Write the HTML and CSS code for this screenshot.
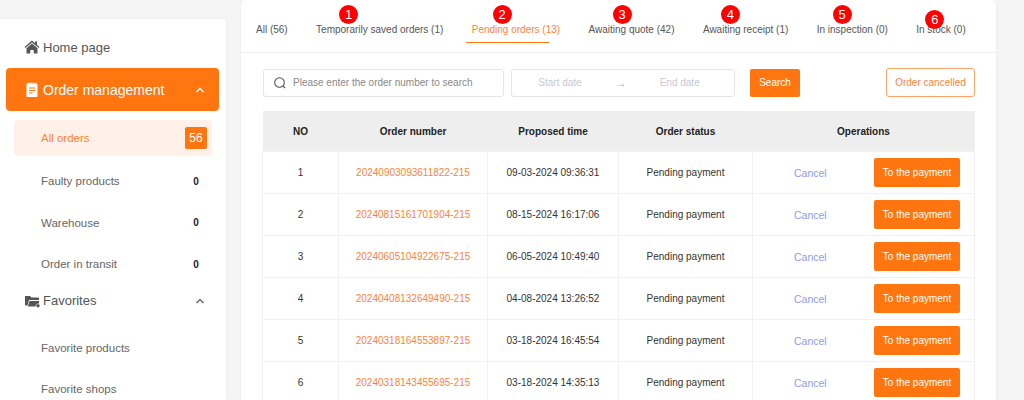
FILE: index.html
```html
<!DOCTYPE html>
<html lang="en">
<head>
  <meta charset="UTF-8">
  <title>Order management</title>
  <link rel="stylesheet" href="styles.css">
</head>
<body>
  <div class="page">
    <aside class="sidebar">
      <a class="nav-top">
        <svg class="nav-icon" viewBox="0 0 16 16"><path fill="#555" d="M8 1.6 .6 8l.8 1L8 3.4 14.6 9l.8-1-2.4-2.1V2.4h-2v1.8z"/><path fill="#555" d="M8 4.6 2.5 9.2V14.5h3.8v-3.6h3.4v3.600h3.800V9.2z"/></svg>
        Home page
      </a>
      <a class="nav-main">
        <svg class="nav-icon" viewBox="0 0 16 16"><path fill="#fff" fill-rule="evenodd" d="M3.5 1.5h.9V.6h1v.9h1.100V.6h1v.9h1.100V.6h1v.9h1.100V.6h1v.9h.8c.6 0 1 .4 1 1v11.600c0 .6-.4 1-1 1h-9c-.6 0-1-.4-1-1V2.5c0-.6.4-1 1-1zM5 5.5v1.100h6V5.500zM5 8v1.100h6V8zm0 2.500v1.100h3.500v-1.100z"/></svg>
        <span class="nav-label">Order management</span>
        <svg class="chev" viewBox="0 0 10 6"><path fill="none" stroke="#fff" stroke-width="1.5" d="M1.5 5 5 1.5 8.5 5"/></svg>
      </a>
      <ul class="sub-list">
        <li class="sub-item active">All orders <span class="count-box">56</span></li>
        <li class="sub-item faulty">Faulty products <span class="count">0</span></li>
        <li class="sub-item">Warehouse <span class="count">0</span></li>
        <li class="sub-item">Order in transit <span class="count">0</span></li>
      </ul>
      <a class="nav-top fav">
        <svg class="nav-icon" viewBox="0 0 16 16"><path fill="#555" d="M1 3h5l1.500 1.500H14c.5 0 1 .4 1 1V7H5L3.500 12.500H1z"/><path fill="#555" d="M5.500 8H15v2.500a3 3 0 0 0-3.500 3H3.800z"/><circle cx="14" cy="12.8" r="1.7" fill="#555"/></svg>
        <span class="nav-label">Favorites</span>
        <svg class="chev" viewBox="0 0 10 6"><path fill="none" stroke="#555" stroke-width="1.2" d="M1.5 5 5 1.5 8.5 5"/></svg>
      </a>
      <ul class="sub-list fav-list">
        <li class="sub-item">Favorite products</li>
        <li class="sub-item">Favorite shops</li>
      </ul>
    </aside>

    <main class="content">
      <div class="tabs">
        <div class="tab">All (56)</div>
        <div class="tab">Temporarily saved orders (1)<span class="mark m1">1</span></div>
        <div class="tab active">Pending orders (13)<span class="mark m2">2</span></div>
        <div class="tab">Awaiting quote (42)<span class="mark m3">3</span></div>
        <div class="tab">Awaiting receipt (1)<span class="mark m4">4</span></div>
        <div class="tab">In inspection (0)<span class="mark m5">5</span></div>
        <div class="tab">In stock (0)<span class="mark m6">6</span></div>
      </div>

      <div class="filters">
        <div class="search-box">
          <svg class="search-icon" viewBox="0 0 14 14"><circle cx="6.5" cy="6.5" r="4.8" fill="none" stroke="#555" stroke-width="1.1"/><path stroke="#555" stroke-width="1.1" d="m10 10 2.200 2.200"/></svg>
          Please enter the order number to search
        </div>
        <div class="date-box">
          <span>Start date</span>
          <span class="arrow">&#8594;</span>
          <span>End date</span>
        </div>
        <button class="btn search-btn">Search</button>
        <button class="cancelled-btn">Order cancelled</button>
      </div>

      <table class="orders">
        <colgroup>
          <col class="c-no"><col class="c-num"><col class="c-time"><col class="c-status"><col>
        </colgroup>
        <thead>
          <tr><th>NO</th><th>Order number</th><th>Proposed time</th><th>Order status</th><th>Operations</th></tr>
        </thead>
        <tbody>
          <tr><td>1</td><td class="num">20240903093611822-215</td><td>09-03-2024 09:36:31</td><td>Pending payment</td><td><div class="ops"><span class="cancel">Cancel</span><button class="btn pay-btn">To the payment</button></div></td></tr>
          <tr><td>2</td><td class="num">20240815161701904-215</td><td>08-15-2024 16:17:06</td><td>Pending payment</td><td><div class="ops"><span class="cancel">Cancel</span><button class="btn pay-btn">To the payment</button></div></td></tr>
          <tr><td>3</td><td class="num">20240605104922675-215</td><td>06-05-2024 10:49:40</td><td>Pending payment</td><td><div class="ops"><span class="cancel">Cancel</span><button class="btn pay-btn">To the payment</button></div></td></tr>
          <tr><td>4</td><td class="num">20240408132649490-215</td><td>04-08-2024 13:26:52</td><td>Pending payment</td><td><div class="ops"><span class="cancel">Cancel</span><button class="btn pay-btn">To the payment</button></div></td></tr>
          <tr><td>5</td><td class="num">20240318164553897-215</td><td>03-18-2024 16:45:54</td><td>Pending payment</td><td><div class="ops"><span class="cancel">Cancel</span><button class="btn pay-btn">To the payment</button></div></td></tr>
          <tr><td>6</td><td class="num">20240318143455695-215</td><td>03-18-2024 14:35:13</td><td>Pending payment</td><td><div class="ops"><span class="cancel">Cancel</span><button class="btn pay-btn">To the payment</button></div></td></tr>
        </tbody>
      </table>
    </main>
  </div>
</body>
</html>
```

FILE: styles.css
```css
html, body {
  margin: 0;
  height: 400px;
  overflow: hidden;
  background-color: #f5f5f5;
}
body {
  font-family: "Liberation Sans", Arial, sans-serif;
  font-size: 10px;
  color: #333;
}
.page {
  display: flex;
  align-items: flex-start;
  gap: 15px;
  height: 400px;
}

/* Sidebar */
.sidebar {
  width: 226px;
  height: 381px;
  margin-top: 19px;
  padding: 7px 7px 0 6px;
  box-sizing: border-box;
  background-color: #fff;
  border-radius: 0 4px 0 0;
  box-shadow: 0 0 2px rgba(0, 0, 0, 0.08);
  overflow: hidden;
}
.nav-top {
  display: flex;
  align-items: center;
  height: 42px;
  padding: 0 14px 0 18px;
  font-size: 13px;
  color: #555;
}
.nav-icon {
  width: 16px;
  height: 16px;
  margin-right: 3px;
  flex: none;
}
.nav-main {
  display: flex;
  align-items: center;
  height: 43px;
  padding: 0 14px 0 18px;
  background-color: #ff750f;
  border-radius: 4px;
  font-size: 14px;
  color: #fff;
}
.nav-label {
  flex: 1;
}
.chev {
  width: 10px;
  height: 6px;
}
.sub-list {
  list-style: none;
  margin: 9px 0 0;
  padding: 0 7px 0 8px;
}
.sub-item {
  display: flex;
  align-items: center;
  justify-content: space-between;
  height: 36px;
  padding: 0 5px 0 27px;
  margin-bottom: 5.5px;
  font-size: 11.5px;
  color: #666;
}
.sub-item.active {
  background-color: #fff1e8;
  border-radius: 4px;
  color: #ff8238;
}
.sub-item.faulty {
  margin-top: 7px;
}
.count-box {
  width: 22px;
  height: 22px;
  line-height: 22px;
  text-align: center;
  font-size: 12px;
  background-color: #ff750f;
  border-radius: 2px;
  color: #fff;
}
.count {
  width: 22px;
  text-align: center;
  font-size: 10px;
  font-weight: bold;
  color: #222;
}
.fav {
  height: 38px;
  margin-top: -6px;
}
.fav-list {
  margin-top: 10px;
}
.fav-list .sub-item {
  margin-bottom: 5px;
}

/* Main panel */
.content {
  position: relative;
  width: 755px;
  height: 400px;
  background-color: #fff;
  border-radius: 4px 4px 0 0;
  box-shadow: 0 0 2px rgba(0, 0, 0, 0.1);
  overflow: hidden;
}
.tabs {
  display: flex;
  gap: 28.4px;
  height: 53px;
  padding: 23px 0 0 15px;
  box-sizing: border-box;
  border-bottom: 1px solid #eee;
  line-height: 14px;
  color: #555;
}
.tab {
  position: relative;
  white-space: nowrap;
}
.tab.active {
  color: #ff8238;
}
.tab.active::after {
  content: "";
  position: absolute;
  left: -6px;
  top: 19px;
  width: 83px;
  height: 1px;
  background-color: #ff750f;
}

/* Numbered callouts drawn over the tabs */
.mark {
  position: absolute;
  width: 19px;
  height: 19px;
  line-height: 19px;
  border-radius: 50%;
  background-color: #f00;
  color: #fff;
  font-size: 13px;
  text-align: center;
}
.m1 { left: 23px; top: -18px; }
.m2 { left: 21px; top: -18px; }
.m3 { left: 24px; top: -18px; }
.m4 { left: 18px; top: -18px; }
.m5 { left: 16px; top: -18px; }
.m6 { left: 9px; top: -13px; }

.filters {
  display: flex;
  align-items: center;
  height: 29px;
  margin: 15px 21px 0 22px;
}
.search-box {
  display: flex;
  align-items: center;
  width: 241px;
  height: 28px;
  padding-left: 9px;
  box-sizing: border-box;
  border: 1px solid #e3e6ec;
  border-radius: 3px;
  color: #888;
}
.search-icon {
  width: 14px;
  height: 14px;
  margin-right: 6px;
}
.date-box {
  display: flex;
  align-items: center;
  justify-content: center;
  gap: 33px;
  width: 224px;
  height: 28px;
  margin-left: 7px;
  padding-right: 8px;
  box-sizing: border-box;
  border: 1px solid #e3e6ec;
  border-radius: 3px;
  color: #c5c9d0;
}
.arrow {
  font-size: 12px;
  color: #b5b9c0;
}
.btn {
  border: none;
  border-radius: 2px;
  background-color: #ff750f;
  color: #fff;
  font-family: inherit;
  font-size: 10px;
  padding: 0;
}
.search-btn {
  width: 50px;
  height: 28px;
  margin-left: 15px;
}
.cancelled-btn {
  width: 89px;
  height: 29px;
  margin-left: auto;
  padding: 0;
  background-color: #fff;
  border: 1px solid #ffa467;
  border-radius: 3px;
  color: #ff8238;
  font-family: inherit;
  font-size: 10px;
}

/* Orders table */
.orders {
  width: 713px;
  margin: 14px 0 0 21px;
  border-collapse: collapse;
  table-layout: fixed;
  font-size: 10px;
}
.c-no { width: 76px; }
.c-num { width: 149px; }
.c-time { width: 131px; }
.c-status { width: 134px; }
.orders th {
  height: 40px;
  padding: 0;
  background-color: #eee;
  color: #222;
  font-weight: bold;
}
.orders td {
  height: 41px;
  padding: 0;
  border: 1px solid #f2f2f2;
  text-align: center;
  color: #333;
}
.orders .num {
  color: #ff8238;
}
.ops {
  display: flex;
  align-items: center;
  justify-content: space-between;
  padding: 0 14px 0 41px;
}
.cancel {
  font-size: 10.5px;
  color: #8e9bf2;
}
.pay-btn {
  width: 86px;
  height: 29px;
  font-size: 10px;
}
```
